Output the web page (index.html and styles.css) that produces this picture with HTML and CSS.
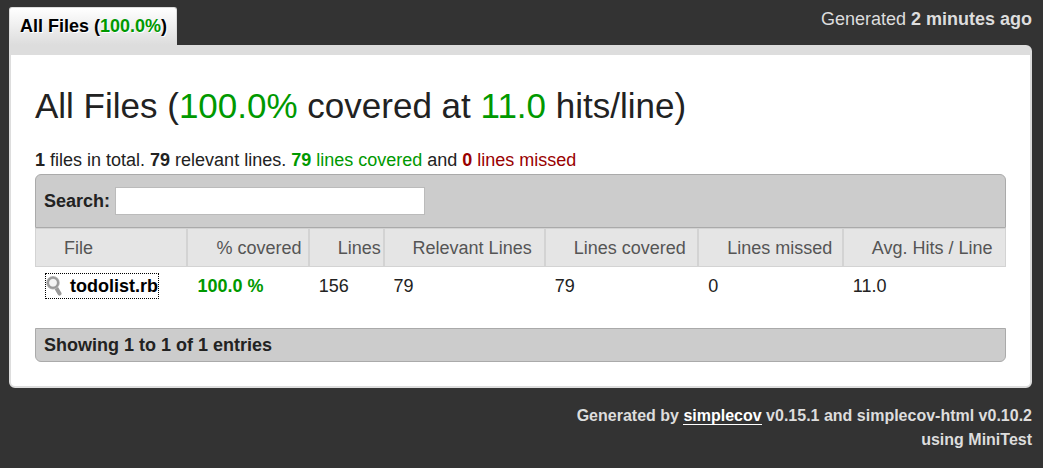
FILE: index.html
```html
<!DOCTYPE html>
<html lang="en">
<head>
<meta charset="utf-8">
<title>Code coverage</title>
<link rel="stylesheet" href="styles.css">
</head>
<body>
<div class="wrapper">
  <header class="top">
    <nav class="tabs"><a class="tab" href="#all">All Files (<span class="green">100.0%</span>)</a></nav>
    <p class="timestamp">Generated <strong>2 minutes ago</strong></p>
  </header>
  <main class="content" id="all">
    <h1 class="title">All Files (<span class="green">100.0%</span> covered at <span class="green">11.0</span> hits/line)</h1>
    <p class="summary"><b>1</b> files in total. <b>79</b> relevant lines. <span class="green"><b>79</b> lines covered</span> and <span class="red"><b>0</b> lines missed</span></p>
    <div class="bar search">
      <label for="filter">Search:</label>
      <input class="filter" id="filter" type="text">
    </div>
    <table class="files">
      <colgroup>
        <col class="c-file"><col class="c-percent"><col class="c-lines"><col class="c-relevant"><col class="c-covered"><col class="c-missed"><col class="c-hits">
      </colgroup>
      <thead>
        <tr><th>File</th><th>% covered</th><th>Lines</th><th>Relevant Lines</th><th>Lines covered</th><th>Lines missed</th><th>Avg. Hits / Line</th></tr>
      </thead>
      <tbody>
        <tr>
          <td><a class="file-link" href="#todolist"><svg class="lens" viewBox="0 0 16 20" aria-hidden="true"><path d="M10 11.5L13.5 17.6" fill="none" stroke="#999" stroke-width="4" stroke-linecap="round"/><circle cx="7" cy="6.8" r="5.3" fill="#f4f4f4" stroke="#b8b8b8" stroke-width="3"/><circle cx="7" cy="6.8" r="5.1" fill="none" stroke="#999" stroke-width="1.8"/></svg>todolist.rb</a></td>
          <td class="green"><b>100.0 %</b></td><td>156</td><td>79</td><td>79</td><td>0</td><td>11.0</td>
        </tr>
      </tbody>
    </table>
    <div class="bar info">Showing 1 to 1 of 1 entries</div>
  </main>
  <footer class="footer">Generated by <a class="credit" href="#simplecov">simplecov</a> v0.15.1 and simplecov-html v0.10.2<br>using MiniTest</footer>
</div>
</body>
</html>
```
FILE: styles.css
```css
* { box-sizing: border-box; }
body {
  margin: 0;
  background: #333;
  color: #222;
  font: 18px/24px "Liberation Sans", Arial, sans-serif;
}
.wrapper { padding: 7px 11px 16px 9px; }
.green { color: #090; }
.red { color: #900; }
.top { display: flex; justify-content: space-between; align-items: flex-start; }
.tab {
  display: block;
  padding: 6px 9px 7px 10px;
  border: 1px solid #ddd;
  border-bottom: 0;
  border-radius: 3px 3px 0 0;
  background: linear-gradient(#fff, #ddd);
  color: #000;
  font-weight: bold;
  text-decoration: none;
  text-shadow: 1px 1px 0 #fff;
}
.timestamp { margin: 0; color: #ddd; }
.content {
  padding: 24px;
  border: 2px solid #ddd;
  border-top-width: 10px;
  border-radius: 0 6px 6px 6px;
  background: #fff;
}
.title { margin: 0; font-size: 35px; line-height: 54px; font-weight: normal; }
.summary { margin: 15px 0 2px; }
.bar { border: 1px solid #aaa; background: #ccc; font-weight: bold; }
.search { display: flex; align-items: center; gap: 5px; padding: 12px 8px; border-radius: 6px 6px 0 0; }
.filter { width: 310px; height: 28px; padding: 4px; border: 1px solid #bbb; background: #fff; font: inherit; }
.files { width: 100%; margin-bottom: 23px; border-collapse: separate; border-spacing: 0; table-layout: fixed; }
.files th {
  padding: 7px 0 6px 28px;
  border: 1px solid #d3d3d3;
  background: #e5e5e5;
  color: #555;
  font-weight: normal;
  text-align: left;
  white-space: nowrap;
}
.files td { padding: 5px 0 6px 10px; line-height: 26px; white-space: nowrap; }
.c-file { width: 15.7%; }
.c-percent { width: 12.5%; }
.c-lines { width: 7.7%; }
.c-relevant { width: 16.6%; }
.c-covered { width: 15.8%; }
.c-missed { width: 14.9%; }
.c-hits { width: 16.8%; }
.file-link {
  display: inline-flex;
  align-items: center;
  gap: 8px;
  border: 1px dotted #000;
  color: #000;
  line-height: 24px;
  font-weight: bold;
  text-decoration: none;
  vertical-align: middle;
}
.lens { width: 16px; height: 20px; }
.info { padding: 4px 8px; border-radius: 0 0 6px 6px; }
.footer { padding-top: 16px; color: #ddd; font-size: 16px; font-weight: bold; text-align: right; }
.credit { border-bottom: 1px solid #fff; color: #fff; text-decoration: none; }
```
